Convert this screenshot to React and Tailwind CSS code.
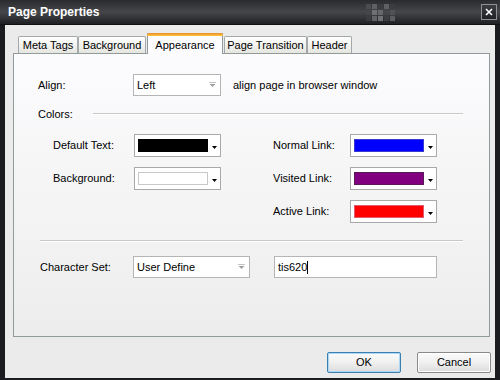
import React from "react";

function Tab({ label, width, selected }) {
  if (selected) {
    return (
      <div
        className={`relative z-10 -mb-px h-[21px] flex items-start justify-center bg-[#fcfcfe] border border-b-0 border-[#919b9c] border-t-0`}
        style={{ width }}
      >
        <div className="absolute left-[-1px] right-[-1px] top-0 h-[3px] bg-gradient-to-b from-[#e68b2c] to-[#ffc73c] rounded-t-[2px]" />
        <span className="mt-[4px]">{label}</span>
      </div>
    );
  }
  return (
    <div
      className="h-[17px] flex items-center justify-center bg-gradient-to-b from-[#ffffff] to-[#e6e6e0] border border-b-0 border-[#a3a9aa] rounded-t-[2px]"
      style={{ width }}
    >
      <span className="mt-[1px]">{label}</span>
    </div>
  );
}

function SelectBox({ value, width }) {
  return (
    <div
      className="h-[22px] flex items-center bg-white border border-[#b5b5b5]"
      style={{ width }}
    >
      <span className="flex-1 pl-[3px] pt-[1px]">{value}</span>
      <div className="w-[16px] h-full flex items-center justify-center">
        <svg width="7" height="6" viewBox="0 0 7 6">
          <rect x="0" y="0" width="7" height="1" fill="#c4c4c4" />
          <polygon points="0.5,2 6.5,2 3.5,5" fill="#a0a0a0" />
        </svg>
      </div>
    </div>
  );
}

function ColorBox({ color, swatchBorder }) {
  return (
    <div className="w-[87px] h-[23px] flex items-center bg-white border border-[#a9a9a9] pl-[3px]">
      <div
        className="w-[70px] h-[13px] border"
        style={{ backgroundColor: color, borderColor: swatchBorder }}
      />
      <div className="flex-1 flex items-center justify-center pt-[3px]">
        <svg width="5" height="3" viewBox="0 0 5 3">
          <polygon points="0,0 5,0 2.5,3" fill="#000" />
        </svg>
      </div>
    </div>
  );
}

function ColorRow({ label, labelWidth, color, swatchBorder }) {
  return (
    <div className="flex items-center h-[23px]">
      <span style={{ width: labelWidth }}>{label}</span>
      <ColorBox color={color} swatchBorder={swatchBorder} />
    </div>
  );
}

function Etched({ className = "" }) {
  return (
    <div className={`h-[2px] border-t border-[#c8c8c8] border-b border-b-white ${className}`} />
  );
}

function Button({ label, primary }) {
  return (
    <div
      className={`w-[74px] h-[21px] flex items-center justify-center rounded-[2px] border bg-gradient-to-b from-[#fbfbfb] via-[#f0f0f0] to-[#dcdcdc] ${
        primary ? "border-[#3c7fb1] shadow-[inset_0_0_0_1px_#a9d7f5]" : "border-[#8a8a8a] shadow-[inset_0_0_0_1px_#ffffff]"
      }`}
    >
      {label}
    </div>
  );
}

export default function App() {
  return (
    <div className="w-[500px] h-[380px] bg-[#1b1c1f] flex flex-col font-['Liberation_Sans',Arial,sans-serif] text-[11px] text-black overflow-hidden">
      {/* Title bar */}
      <div className="h-[25px] shrink-0 flex items-center pl-[8px] pr-[3px] bg-gradient-to-b from-[#2a2b2e] via-[#45474b] to-[#1f2023] border-b border-[#111]">
        <span className="text-white font-bold text-[12px] leading-none">Page Properties</span>
        <div className="flex-1" />
        <div className="grid grid-cols-5 gap-[1px]">
          {[
            "#4a4c50", "#5e6064", "#3a3c40", "#5e6064", "#3a3c40",
            "#44464a", "#6e7074", "#66686c", "#44464a", "#505256",
            "#3a3c40", "#606266", "#6e7074", "#3a3c40", "#5a5c60",
          ].map((c, i) => (
            <div key={i} className="w-[5px] h-[5px]" style={{ backgroundColor: c }} />
          ))}
        </div>
        <div className="w-[86px]" />
        <div className="w-[16px] h-[16px] flex items-center justify-center border border-[#8e9094] bg-gradient-to-b from-[#3c3e42] to-[#202124]">
          <svg width="8" height="8" viewBox="0 0 8 8">
            <path d="M1 1 L7 7 M7 1 L1 7" stroke="#fff" strokeWidth="1.6" />
          </svg>
        </div>
      </div>

      {/* Body */}
      <div className="flex-1 mx-[5px] mb-[2px] bg-[#ebebeb] flex flex-col">
        {/* Tabs */}
        <div className="mt-[8px] ml-[13px] h-[20px] flex items-end">
          <Tab label="Meta Tags" width={60} />
          <Tab label="Background" width={68} />
          <div className="w-[1px]" />
          <Tab label="Appearance" width={76} selected />
          <div className="w-[1px]" />
          <Tab label="Page Transition" width={83} />
          <Tab label="Header" width={45} />
        </div>

        {/* Panel */}
        <div className="ml-[8px] mr-[5px] h-[284px] border border-[#919b9c] bg-gradient-to-b from-[#fcfcfe] to-[#ededed] flex flex-col">
          {/* Align row */}
          <div className="mt-[20px] pl-[24px] flex items-center">
            <span className="w-[95px]">Align:</span>
            <SelectBox value="Left" width={88} />
            <span className="ml-[12px]">align page in browser window</span>
          </div>

          {/* Colors row */}
          <div className="mt-[11px] pl-[24px] pr-[26px] flex items-center h-[14px]">
            <span className="w-[55px]">Colors:</span>
            <Etched className="flex-1" />
          </div>

          {/* Color grid */}
          <div className="mt-[13px] pl-[39px] flex">
            <div className="w-[220px] flex flex-col gap-[10px]">
              <ColorRow label="Default Text:" labelWidth={81} color="#000000" swatchBorder="#000000" />
              <ColorRow label="Background:" labelWidth={81} color="#ffffff" swatchBorder="#c8c8c8" />
            </div>
            <div className="flex flex-col gap-[10px]">
              <ColorRow label="Normal Link:" labelWidth={77} color="#0000ff" swatchBorder="#3a3ad0" />
              <ColorRow label="Visited Link:" labelWidth={77} color="#800080" swatchBorder="#5a1a5a" />
              <ColorRow label="Active Link:" labelWidth={77} color="#ff0000" swatchBorder="#e05a6a" />
            </div>
          </div>

          <Etched className="mt-[17px] ml-[26px] mr-[26px]" />

          {/* Character set row */}
          <div className="mt-[14px] pl-[26px] flex items-center">
            <span className="w-[93px]">Character Set:</span>
            <SelectBox value="User Define" width={117} />
            <div className="ml-[24px] w-[163px] h-[22px] bg-white border border-[#b5b5b5] flex items-center pl-[3px]">
              <span className="pt-[1px]">tis620</span>
              <span className="w-[1px] h-[13px] bg-black" />
            </div>
          </div>
        </div>

        {/* Buttons */}
        <div className="mt-[15px] pr-[4px] flex justify-end gap-[16px]">
          <Button label="OK" primary />
          <Button label="Cancel" />
        </div>
      </div>
    </div>
  );
}
